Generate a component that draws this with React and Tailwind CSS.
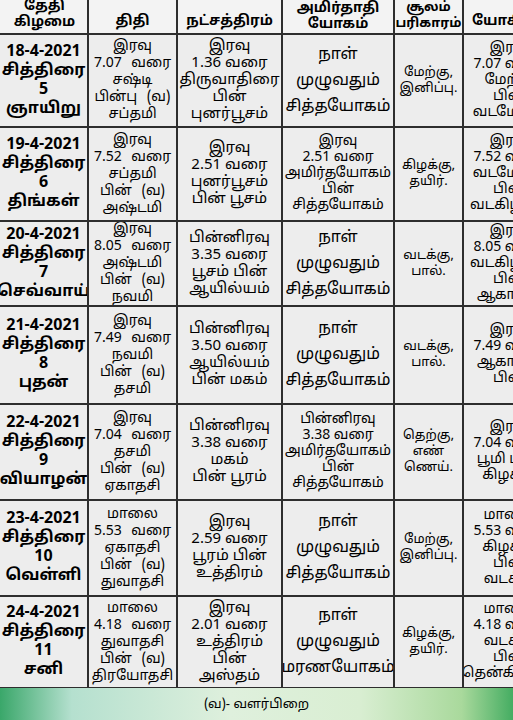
const FONT = { fontFamily: '"Noto Sans Tamil", "Lohit Tamil", "Noto Sans", "Liberation Sans", sans-serif' };

const rows = [
  {
    date: ['18-4-2021', 'சித்திரை', '5', 'ஞாயிறு'],
    thithi: ['இரவு', '7.07 வரை', 'சஷ்டி', 'பின்பு (வ)', 'சப்தமி'],
    nak: ['இரவு', '1.36 வரை', 'திருவாதிரை', 'பின்', 'புனர்பூசம்'],
    yogam: ['நாள்', 'முழுவதும்', 'சித்தயோகம்'],
    big: true,
    soolam: ['மேற்கு,', 'இனிப்பு.'],
    yogi: ['இரவு', '7.07 வரை', 'மேற்கு', 'பின்', 'வடமேற்கு'],
  },
  {
    date: ['19-4-2021', 'சித்திரை', '6', 'திங்கள்'],
    thithi: ['இரவு', '7.52 வரை', 'சப்தமி', 'பின் (வ)', 'அஷ்டமி'],
    nak: ['இரவு', '2.51 வரை', 'புனர்பூசம்', 'பின் பூசம்'],
    yogam: ['இரவு', '2.51 வரை', 'அமிர்தயோகம்', 'பின்', 'சித்தயோகம்'],
    soolam: ['கிழக்கு,', 'தயிர்.'],
    yogi: ['இரவு', '7.52 வரை', 'வடமேற்கு', 'பின்', 'வடகிழக்கு'],
  },
  {
    date: ['20-4-2021', 'சித்திரை', '7', 'செவ்வாய்'],
    thithi: ['இரவு', '8.05 வரை', 'அஷ்டமி', 'பின் (வ)', 'நவமி'],
    nak: ['பின்னிரவு', '3.35 வரை', 'பூசம் பின்', 'ஆயில்யம்'],
    yogam: ['நாள்', 'முழுவதும்', 'சித்தயோகம்'],
    big: true,
    soolam: ['வடக்கு,', 'பால்.'],
    yogi: ['இரவு', '8.05 வரை', 'வடகிழக்கு', 'பின்', 'ஆகாயம்'],
  },
  {
    date: ['21-4-2021', 'சித்திரை', '8', 'புதன்'],
    thithi: ['இரவு', '7.49 வரை', 'நவமி', 'பின் (வ)', 'தசமி'],
    nak: ['பின்னிரவு', '3.50 வரை', 'ஆயில்யம்', 'பின் மகம்'],
    yogam: ['நாள்', 'முழுவதும்', 'சித்தயோகம்'],
    big: true,
    soolam: ['வடக்கு,', 'பால்.'],
    yogi: ['இரவு', '7.49 வரை', 'ஆகாயம்', 'பின்'],
  },
  {
    date: ['22-4-2021', 'சித்திரை', '9', 'வியாழன்'],
    thithi: ['இரவு', '7.04 வரை', 'தசமி', 'பின் (வ)', 'ஏகாதசி'],
    nak: ['பின்னிரவு', '3.38 வரை', 'மகம்', 'பின் பூரம்'],
    yogam: ['பின்னிரவு', '3.38 வரை', 'அமிர்தயோகம்', 'பின்', 'சித்தயோகம்'],
    soolam: ['தெற்கு,', 'எண்', 'ணெய்.'],
    yogi: ['இரவு', '7.04 வரை', 'பூமி பின்', 'கிழக்கு'],
  },
  {
    date: ['23-4-2021', 'சித்திரை', '10', 'வெள்ளி'],
    thithi: ['மாலை', '5.53 வரை', 'ஏகாதசி', 'பின் (வ)', 'துவாதசி'],
    nak: ['இரவு', '2.59 வரை', 'பூரம் பின்', 'உத்திரம்'],
    yogam: ['நாள்', 'முழுவதும்', 'சித்தயோகம்'],
    big: true,
    soolam: ['மேற்கு,', 'இனிப்பு.'],
    yogi: ['மாலை', '5.53 வரை', 'கிழக்கு', 'பின்', 'வடக்கு'],
  },
  {
    date: ['24-4-2021', 'சித்திரை', '11', 'சனி'],
    thithi: ['மாலை', '4.18 வரை', 'துவாதசி', 'பின் (வ)', 'திரயோதசி'],
    nak: ['இரவு', '2.01 வரை', 'உத்திரம்', 'பின்', 'அஸ்தம்'],
    yogam: ['நாள்', 'முழுவதும்', 'மரணயோகம்'],
    big: true,
    soolam: ['கிழக்கு,', 'தயிர்.'],
    yogi: ['மாலை', '4.18 வரை', 'வடக்கு', 'பின்', 'தென்கிழக்கு'],
  },
];

const Cell = ({ lines, className = '' }) => (
  <div className={`flex flex-col items-center justify-center text-center whitespace-nowrap overflow-hidden ${className}`}>
    {lines.map((l, i) => (
      <span key={i}>{l}</span>
    ))}
  </div>
);

const Row = ({ r }) => (
  <>
    <Cell lines={r.date} className="bg-[#ededed] text-[16px] font-bold leading-[19px] pl-[10px]" />
    <Cell lines={r.thithi} className="bg-[#ededed] text-[14px] leading-[17px] [word-spacing:6px]" />
    <Cell lines={r.nak} className="bg-[#ededed] text-[15px] leading-[17px]" />
    <Cell
      lines={r.yogam}
      className={r.big ? 'bg-[#ededed] text-[16px] leading-[26px]' : 'bg-[#ededed] text-[14px] leading-[16px]'}
    />
    <Cell lines={r.soolam} className="bg-[#ededed] text-[13px] leading-[16px]" />
    <Cell lines={r.yogi} className="bg-[#ededed] text-[14px] leading-[16px] pr-[10px]" />
  </>
);

export default function App() {
  return (
    <div className="w-[513px] h-[720px] overflow-hidden bg-white text-black" style={FONT}>
      <div className="ml-[-12px] mt-[-13px] w-[560px] grid grid-cols-[97px_87px_103px_110px_67px_100px] grid-rows-[44px_91px_92px_83px_96px_94px_94px_90px] gap-[2px] p-[2px] bg-[#2e2e2e]">
        <Cell lines={['தேதி', 'கிழமை']} className="bg-[#f3f3f3] text-[14px] font-bold leading-[16px] pl-[12px] pt-[8px]" />
        <Cell lines={['திதி']} className="bg-[#f3f3f3] text-[14px] font-bold leading-[17px] pt-[20px]" />
        <Cell lines={['நட்சத்திரம்']} className="bg-[#f3f3f3] text-[14px] font-bold leading-[17px] pt-[20px]" />
        <Cell lines={['அமிர்தாதி', 'யோகம்']} className="bg-[#f3f3f3] text-[14px] font-bold leading-[16px] pt-[12px]" />
        <Cell lines={['சூலம்', 'பரிகாரம்']} className="bg-[#f3f3f3] text-[13px] font-bold leading-[16px] pt-[10px]" />
        <Cell lines={['யோகினி']} className="bg-[#f3f3f3] text-[14px] font-bold leading-[17px] pt-[20px] !items-start pl-[8px]" />
        {rows.map((r, i) => (
          <Row key={i} r={r} />
        ))}
      </div>
      <div className="h-[40px] mt-[-1px] flex items-center justify-center text-[13px] bg-[linear-gradient(90deg,#3aa76a_0%,#b5e0cf_14%,#dff0dd_45%,#d9eed2_70%,#a9d99c_90%,#45ad62_100%)]">
        <span className="mt-[-4px]">(வ)- வளர்பிறை</span>
      </div>
    </div>
  );
}
